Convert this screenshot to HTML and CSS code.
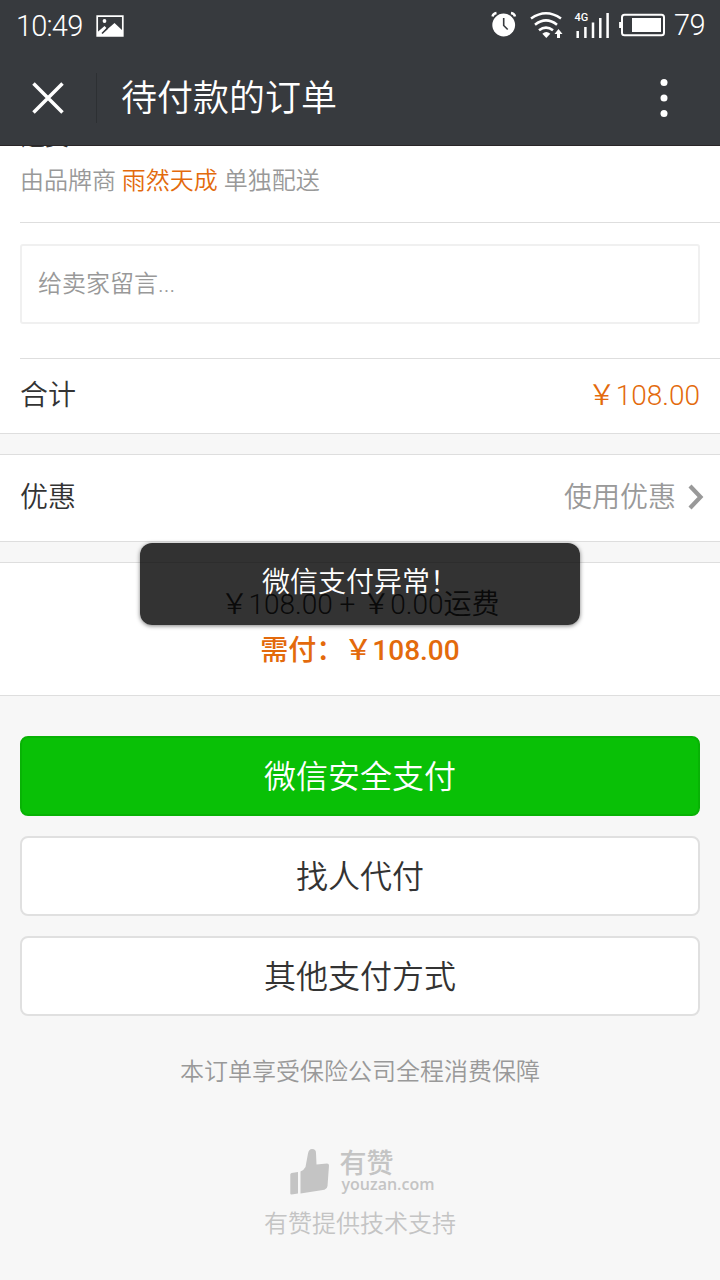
FILE: index.html
```html
<!DOCTYPE html>
<html lang="zh-CN">
<head>
<meta charset="utf-8">
<title>待付款的订单</title>
<link rel="stylesheet" href="styles.css">
</head>
<body>
<div class="screen">
  <header class="top">
    <div class="status">
      <span class="clock">10:49</span>
      <svg class="photo" width="28" height="22" viewBox="0 0 28 22"><path d="M1.2 1.2h25.6v19.6H1.2z" fill="none" stroke="#fff" stroke-width="1.7"/><circle cx="8.500" cy="6" r="1.9" fill="#fff"/><path d="M1 17.500l7.500-6.500 2 2-4 5.500L18.500 8l8.500 8v5H1z" fill="#fff"/><path d="M6 18.500l5.500-5.300" stroke="#373a3e" stroke-width="1.600"/></svg>
      <div class="indicators">
        <svg width="214" height="30" viewBox="490 10 214 30" fill="none" stroke="#fff">
          <circle cx="503.700" cy="25" r="11.400" fill="#fff" stroke="none"/>
          <path d="M492.500 16.500q.6-3 4-3.500M515 16.500q-.6-3-4-3.500" stroke-width="2.400"/>
          <path d="M503.700 18v7.500l4 4" stroke="#373a3e" stroke-width="1.600"/>
          <path d="M531 18.500q15-10.500 30 0M535 24.700q11-8.500 22 0M539 30.300q7-5.500 14 0" stroke-width="2.600"/>
          <path d="M542.300 33.700q4-3.200 8 0l-4 4.300z" fill="#fff" stroke="none"/>
          <path d="M558.500 29l4 5h-2.500v4h-3v-4h-2.500z" fill="#fff" stroke="none"/>
          <path d="M577.700 31v7M585.400 27v11M593 22.500V38M600.300 18v20M607.600 13v25" stroke-width="2.500"/>
          <text x="574.500" y="21.300" class="net">4G</text>
          <rect x="622" y="14.800" width="42" height="20.400" rx="2.500" stroke-width="2"/>
          <path d="M620.200 22v6" stroke-width="2.200"/>
          <path d="M632 18h29v14h-29z" fill="#fff" stroke="none"/>
        </svg>
        <span class="level">79</span>
      </div>
    </div>
    <div class="navbar">
      <svg class="close" width="34" height="34" viewBox="0 0 34 34"><path d="M2.500 2.500l29 29M31.500 2.500l-29 29" stroke="#fff" stroke-width="3.500"/></svg>
      <h1 class="title">待付款的订单</h1>
      <svg class="more" width="10" height="42" viewBox="0 0 10 42" fill="#fff"><circle cx="5" cy="5.500" r="3.500"/><circle cx="5" cy="21" r="3.500"/><circle cx="5" cy="36.500" r="3.500"/></svg>
    </div>
  </header>
  <main class="content">
    <section class="card">
      <div class="delivery">
        <div class="freight">运费</div>
        <div class="carrier">由品牌商 <span class="brand">雨然天成</span> 单独配送</div>
      </div>
      <div class="message"><div class="field">给卖家留言...</div></div>
      <div class="row total"><span>合计</span><span class="price">￥108.00</span></div>
    </section>
    <section class="card row discount">
      <span>优惠</span>
      <span class="use"><span>使用优惠</span><svg width="18" height="28" viewBox="0 0 18 28"><path d="M3 3l10.500 11L3 25" fill="none" stroke="#999" stroke-width="4.200"/></svg></span>
    </section>
    <section class="card summary">
      <div class="sum">￥108.00 + ￥0.00运费</div>
      <div class="due">需付：￥108.00</div>
    </section>
    <div class="actions">
      <div class="btn pay">微信安全支付</div>
      <div class="btn">找人代付</div>
      <div class="btn">其他支付方式</div>
    </div>
    <div class="insured">本订单享受保险公司全程消费保障</div>
    <footer class="footer">
      <div class="logo">
        <svg width="40" height="48" viewBox="0 0 40 48" fill="#c4c4c4"><path d="M1.500 25L8 24v21.500L1.500 46.500q-1.200 0-1.200-1V26.500q0-1 1.200-1.500zM10.500 23.500q3.500-1.500 5-4.500L18 5.500Q18.800 1 22 1q4 0 4 4l.5 11.500L37 15.500q2 0 2 2L37.500 38q-.3 3-3 3.800L10.500 45.500z"/></svg>
        <div class="names"><div class="name">有赞</div><div class="domain">youzan.com</div></div>
      </div>
      <div class="support">有赞提供技术支持</div>
    </footer>
  </main>
  <div class="toast">微信支付异常！</div>
</div>
</body>
</html>
```
FILE: styles.css
```css
* { box-sizing: border-box; }
body { margin: 0; background: #f7f7f7; font-family: Roboto, "Noto Sans CJK SC", sans-serif; font-weight: 350; color: #333; }
.screen { position: relative; width: 720px; height: 1280px; overflow: hidden; display: flex; flex-direction: column; }
.top { height: 146px; flex: none; background: #373a3e; border-bottom: 1px solid #292527; color: #fff; }
.status { height: 50px; display: flex; align-items: center; padding: 0 16px; }
.clock { font-size: 29px; font-weight: 300; width: 80px; padding-top: 2px; letter-spacing: -.8px; }
.photo { margin-top: 1px; }
.indicators { display: flex; align-items: center; margin-left: auto; width: 214px; }
.indicators svg { flex: none; }
.level { font-size: 29px; font-weight: 300; margin-left: -30px; letter-spacing: -.5px; }
.net { font: 500 11px Roboto, sans-serif; fill: #fff; stroke: none; }
.navbar { height: 96px; display: flex; align-items: center; padding: 0 51px 0 31px; }
.title { margin: 0 0 0 31px; padding: 2px 0 0 24px; border-left: 1px solid #2d3033; font-size: 36px; font-weight: 350; line-height: 48px; }
.more { margin-left: auto; }
.content { flex: 1; overflow: hidden; }
.card { background: #fff; border-bottom: 1px solid #dedede; }
.delivery { display: flow-root; height: 77px; margin-left: 20px; border-bottom: 1px solid #dedede; font-size: 24px; }
.freight { height: 36px; margin: -27px 0 8px; padding-left: 1px; line-height: 36px; font-weight: 400; }
.carrier { line-height: 36px; color: #999; }
.brand { color: #e36a0c; }
.message { margin-left: 20px; padding: 21px 20px 34px 0; border-bottom: 1px solid #dedede; }
.field { height: 80px; padding-left: 16px; border: 2px solid #f0f0f0; border-radius: 3px; color: #999; font-size: 24px; line-height: 77px; }
.row { display: flex; justify-content: space-between; align-items: center; padding: 0 20px 6px; font-size: 28px; }
.total { height: 74px; }
.price { color: #e36a0c; }
.discount { height: 88px; margin-top: 20px; border-top: 1px solid #dedede; padding: 0 15px 6px 20px; }
.use { display: flex; align-items: center; gap: 11px; color: #999; }
.use svg { margin-top: 3px; }
.summary { height: 134px; margin-top: 20px; padding-top: 19px; border-top: 1px solid #dedede; text-align: center; font-size: 28px; line-height: 46px; }
.due { color: #e36a0c; font-weight: 500; }
.actions { display: grid; gap: 20px; padding: 40px 20px 0; }
.btn { height: 80px; border: 2px solid #e0e0e0; border-radius: 8px; background: #fff; text-align: center; font-size: 32px; line-height: 79px; }
.pay { background: #09c006; border-color: #08b205; color: #fff; }
.insured { margin-top: 38px; text-align: center; font-size: 24px; line-height: 36px; color: #999; }
.footer { margin-top: 58px; text-align: center; color: #c4c4c4; }
.logo { display: flex; justify-content: center; gap: 12px; height: 52px; padding-left: 4px; }
.names { text-align: left; font-weight: 500; }
.name { margin-left: -2px; font-size: 27px; line-height: 32px; }
.domain { margin-top: -4px; font: 600 16px/16px "Open Sans", sans-serif; }
.support { margin-top: 6px; font-size: 24px; line-height: 36px; }
.toast { position: absolute; left: 140px; top: 543px; width: 440px; height: 82px; border-radius: 12px; background: rgba(0,0,0,.8); box-shadow: 0 1px 4px rgba(0,0,0,.5); color: #fff; font-size: 28px; line-height: 79px; text-align: center; }
```
